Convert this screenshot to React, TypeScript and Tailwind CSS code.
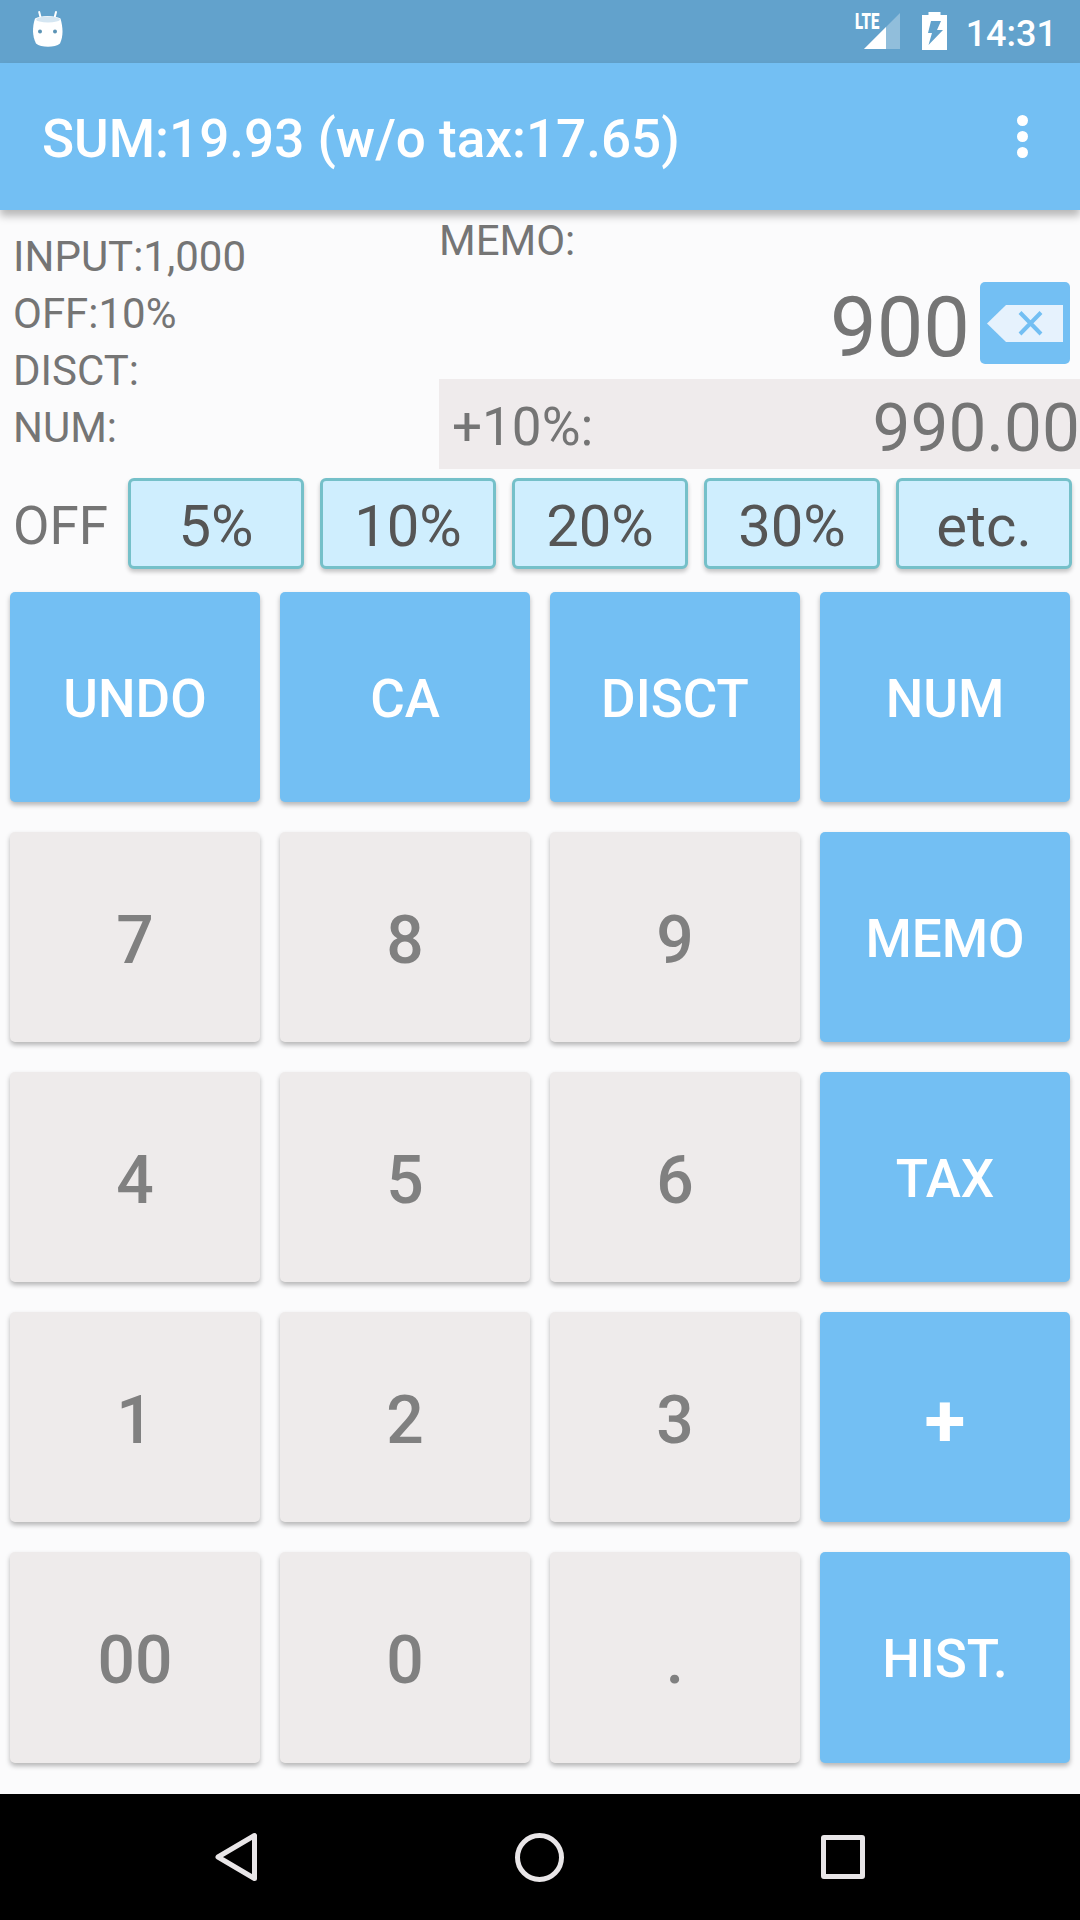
import clsx from "clsx";
import * as React from "react";

type KeyTone = "action" | "digit";

interface PadKey {
  label: string;
  tone: KeyTone;
}

const action = (label: string): PadKey => ({ label, tone: "action" });
const digit = (label: string): PadKey => ({ label, tone: "digit" });

const PAD_KEYS: PadKey[] = [
  action("UNDO"), action("CA"), action("DISCT"), action("NUM"),
  digit("7"), digit("8"), digit("9"), action("MEMO"),
  digit("4"), digit("5"), digit("6"), action("TAX"),
  digit("1"), digit("2"), digit("3"), action("+"),
  digit("00"), digit("0"), digit("."), action("HIST."),
];

const OFF_RATES = ["5%", "10%", "20%", "30%", "etc."];

const INFO_LINES = ["INPUT:1,000", "OFF:10%", "DISCT:", "NUM:"];

function StatusBar() {
  return (
    <div className="flex h-[63px] items-start bg-[#62a2cc] text-white">
      {/* notification icon */}
      <svg className="mt-[10px] ml-8 h-[38px] w-8" viewBox="0 0 32 38" aria-hidden="true">
        <path d="M7.2 2l2 8M24 2l-2 8" stroke="#fff" strokeWidth="2" strokeLinecap="round" />
        <path d="M3 8.500C8 5 23 5 28.500 8.500C31 17 31.500 26 28 33.500C23 37.800 9 37.800 4 33.500C.2 26 .2 17 3 8.500Z" fill="#fff" />
        <ellipse cx="16" cy="9.500" rx="12" ry="3" fill="#d5e6f2" />
        <circle cx="8" cy="21.500" r="2" fill="#5b93b5" />
        <circle cx="23" cy="21.500" r="2" fill="#5b93b5" />
      </svg>

      {/* signal */}
      <div className="relative mt-[13px] ml-auto h-9 w-[46px]">
        <svg className="h-9 w-[46px]" viewBox="0 0 46 36" aria-hidden="true">
          <path d="M45 0V36H9Z" fill="#fff" fillOpacity=".3" />
          <path d="M31 14V36H9Z" fill="#fff" />
        </svg>
        <span className="absolute top-px left-0 origin-left scale-x-[.68] text-[22px] leading-4 font-black">LTE</span>
      </div>

      {/* battery */}
      <svg className="mt-3 ml-[21px] h-[38px] w-[25px]" viewBox="0 0 25 38" aria-hidden="true">
        <path d="M6.500 0H18.500V3H25V38H0V3H6.500Z" fill="#fff" />
        <path d="M9 9H19L15 18H21L6.500 33L10 21H6Z" fill="#62a2cc" />
      </svg>
      <span className="mt-[13px] mr-[23px] ml-[19px] text-[36px] leading-[42px] font-medium">14:31</span>
    </div>
  );
}

function AppBar() {
  return (
    <header className="relative z-10 flex h-[147px] items-center bg-[#73bff3] pr-[52px] pl-[42px] text-white shadow-[0_6px_8px_rgba(0,0,0,0.27)]">
      <h1 className="mt-[6px] text-[53px] leading-[63px] font-medium whitespace-nowrap">SUM:19.93 (w/o tax:17.65)</h1>
      <button type="button" aria-label="More options" className="ml-auto flex flex-col gap-[5px]">
        <i className="size-[11px] rounded-full bg-white" />
        <i className="size-[11px] rounded-full bg-white" />
        <i className="size-[11px] rounded-full bg-white" />
      </button>
    </header>
  );
}

function Readout() {
  return (
    <section className="flex h-[259px] text-[#757575]">
      <div className="w-[439px] pt-[18px] pl-[13px] text-[42px] leading-[57px]">
        {INFO_LINES.map((line) => (
          <p key={line}>{line}</p>
        ))}
      </div>
      <div className="flex flex-1 flex-col">
        <p className="h-[72px] pt-[2px] text-[42px] leading-[57px]">MEMO:</p>
        <div className="flex h-[97px] justify-end pr-[10px]">
          <span className="mr-[10px] text-[83px] leading-[91px]">900</span>
          <button type="button" aria-label="Backspace" className="h-[82px] w-[90px] rounded-[5px] bg-[#73bff3]">
            <svg className="ml-[7px] h-[37px] w-[77px]" viewBox="0 0 77 37" aria-hidden="true">
              <path d="M0 18.500L19 0H76V37H19Z" fill="#e6f2fd" />
              <path d="M33 7.500L54 29M54 7.500L33 29" stroke="#73bff3" strokeWidth="4" />
            </svg>
          </button>
        </div>
        <div className="flex h-[90px] items-center justify-between bg-[#efebec] pt-[7px] pl-[13px]">
          <span className="text-[53px]">+10%:</span>
          <span className="text-[67.5px]">990.00</span>
        </div>
      </div>
    </section>
  );
}

function OffRow() {
  return (
    <section className="flex h-[109px] pt-[9px] pr-2">
      <span className="w-[128px] shrink-0 pl-[13px] text-[53px] leading-[97px] text-[#757575]">OFF</span>
      <div className="grid flex-1 grid-cols-5 gap-4">
        {OFF_RATES.map((rate) => (
          <button
            key={rate}
            type="button"
            className="h-[91px] rounded-[6px] border-3 border-[#75c0c9] bg-[#cfeefe] pt-[4px] text-[58px] leading-none text-[#555] shadow-[0_3px_4px_rgba(0,0,0,0.22)]"
          >
            {rate}
          </button>
        ))}
      </div>
    </section>
  );
}

function KeyButton({ label, tone }: PadKey) {
  return (
    <button
      type="button"
      className={clsx(
        "rounded-[5px] shadow-[0_3px_5px_rgba(0,0,0,0.28)]",
        tone === "digit" && "bg-[#eeebeb] pt-[6px] text-[66px] font-medium text-[#808080]",
        tone === "action" && "bg-[#73bff3] text-white",
        tone === "action" && (label === "+" ? "pt-[7px] text-[75px] font-bold" : "pt-[5px] text-[53px] font-medium"),
      )}
    >
      {label}
    </button>
  );
}

function NavBar() {
  return (
    <nav className="flex h-[126px] items-center justify-between bg-black pr-[215px] pl-[214px]">
      <svg className="h-[50px] w-11" viewBox="0 0 44 50" fill="none" stroke="#e9e6e8" strokeWidth="5" strokeLinejoin="round" aria-hidden="true">
        <path d="M40.500 3.500V46.500L4 25Z" />
      </svg>
      <i className="size-[49px] rounded-full border-[5px] border-[#e9e6e8]" />
      <i className="size-11 rounded-[3px] border-[5px] border-[#e9e6e8]" />
    </nav>
  );
}

export default function App() {
  return (
    <main className="flex h-[1920px] w-[1080px] flex-col overflow-hidden bg-[#fbfbfc] font-[Roboto,sans-serif]">
      <StatusBar />
      <AppBar />
      <Readout />
      <OffRow />
      <section className="grid flex-1 grid-cols-4 grid-rows-[210px_210px_210px_210px_211px] content-start gap-x-5 gap-y-[30px] px-[10px] pt-[14px]">
        {PAD_KEYS.map((key) => (
          <KeyButton key={key.label} {...key} />
        ))}
      </section>
      <NavBar />
    </main>
  );
}
